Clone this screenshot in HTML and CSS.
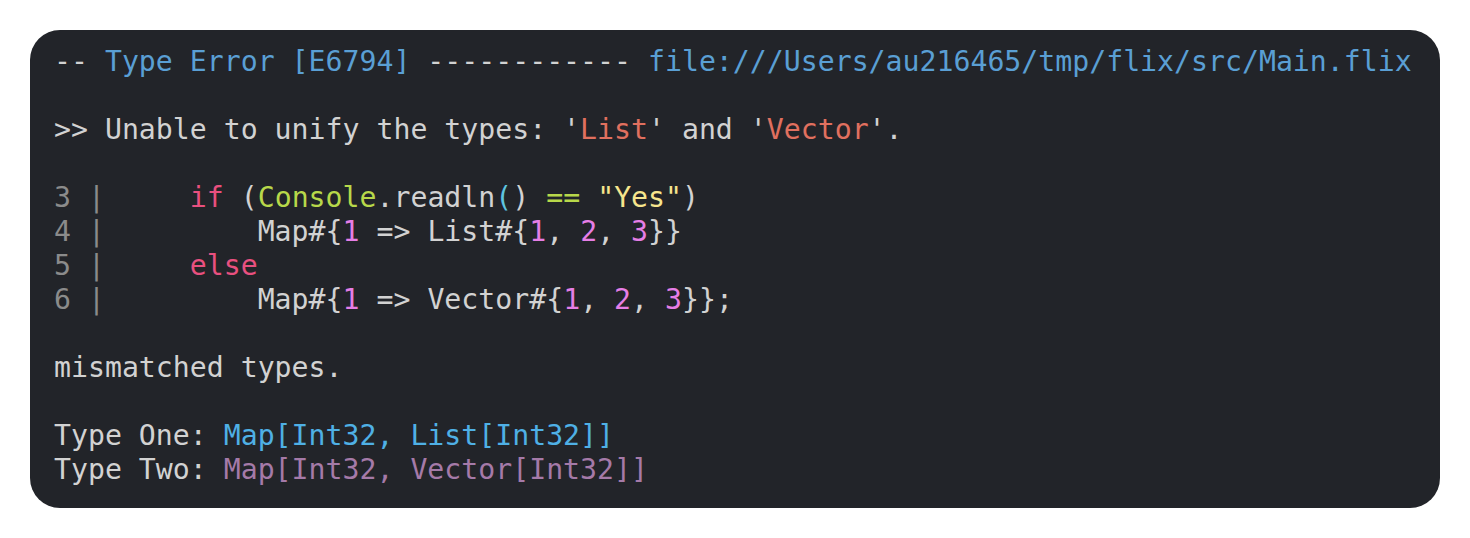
FILE: index.html
```html
<!DOCTYPE html>
<html>
<head>
<meta charset="utf-8">
<link rel="stylesheet" href="styles.css">
</head>
<body>
<div class="term">
<pre class="out">-- <span class="hd">Type Error [E6794]</span> ------------ <span class="hd">file:///Users/au216465/tmp/flix/src/Main.flix</span>

&gt;&gt; Unable to unify the types: '<span class="sal">List</span>' and '<span class="sal">Vector</span>'.

<span class="ln">3 |</span>     <span class="kw">if</span> (<span class="gr">Console</span>.readln<span class="cy">(</span>) <span class="gr">==</span> <span class="ye">"Yes"</span>)
<span class="ln">4 |</span>         Map#{<span class="nu">1</span> =&gt; List#{<span class="nu">1</span>, <span class="nu">2</span>, <span class="nu">3</span>}}
<span class="ln">5 |</span>     <span class="kw">else</span>
<span class="ln">6 |</span>         Map#{<span class="nu">1</span> =&gt; Vector#{<span class="nu">1</span>, <span class="nu">2</span>, <span class="nu">3</span>}};

mismatched types.

Type One: <span class="t1">Map[Int32, List[Int32]]</span>
Type Two: <span class="t2">Map[Int32, Vector[Int32]]</span></pre>
</div>
</body>
</html>
```
FILE: styles.css
```css
html, body {
  margin: 0;
  padding: 0;
  background: #ffffff;
}
body {
  padding: 30px;
}
.term {
  width: 1410px;
  box-sizing: border-box;
  background: #222429;
  border-radius: 30px;
  padding: 15px 24px 21px 24px;
}
.out {
  margin: 0;
  font-family: "DejaVu Sans Mono", "Liberation Mono", monospace;
  font-size: 28.2px;
  line-height: 34px;
  color: #d2d2d2;
  white-space: pre;
}
.hd { color: #5a9fd4; }
.sal { color: #e0705f; }
.ln { color: #8b8b8b; }
.kw { color: #e8507f; }
.gr { color: #b8d84a; }
.cy { color: #5ec4e0; }
.ye { color: #f6e58d; }
.nu { color: #e67ee6; }
.t1 { color: #4fb0e5; }
.t2 { color: #a57aa8; }
```
